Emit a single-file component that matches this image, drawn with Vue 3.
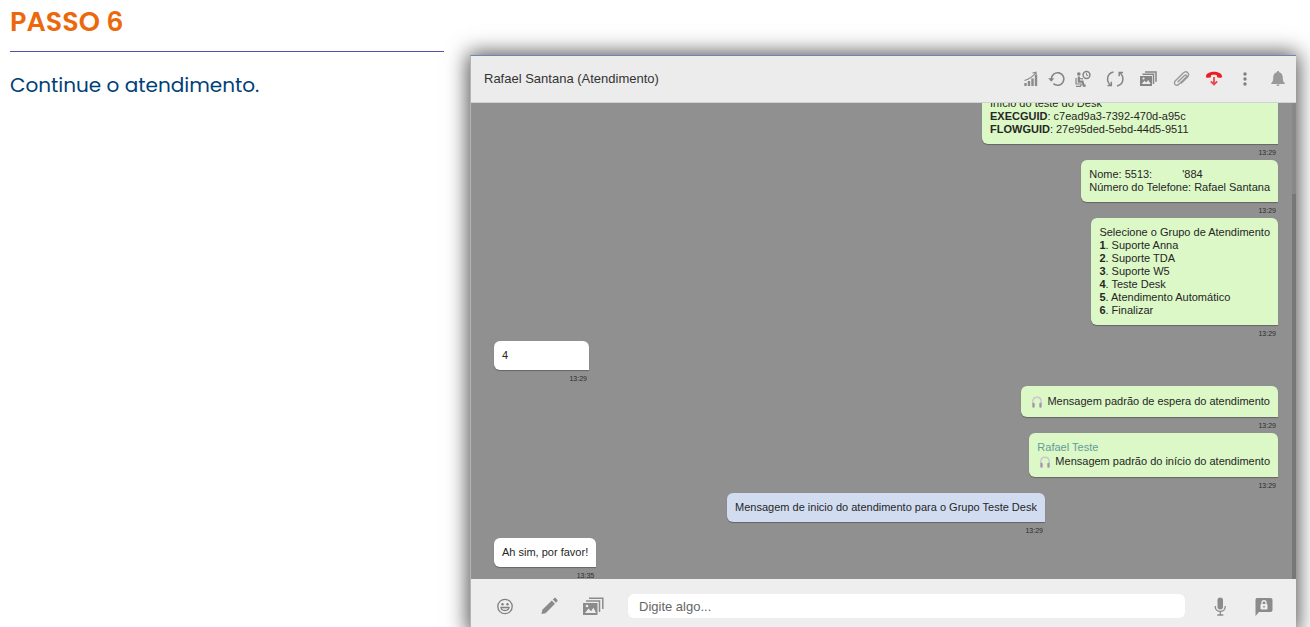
<script setup>
import { ref } from 'vue'

const draft = ref('')

const options = [
  'Suporte Anna',
  'Suporte TDA',
  'Suporte W5',
  'Teste Desk',
  'Atendimento Automático',
  'Finalizar',
]
</script>

<template>
  <main class="page">
    <section class="step">
      <h1>PASSO 6</h1>
      <p>Continue o atendimento.</p>
    </section>

    <section class="window">
      <header class="top">
        <h2>Rafael Santana (Atendimento)</h2>
        <div class="tools">
          <div class="tools-near">
            <button type="button" aria-label="Estatísticas">
              <svg viewBox="0 0 20 20" fill="none" stroke="#8b8b8b">
                <path d="M5.500 17v-3M9 17v-5M12.500 17V9.500M16 17V6" stroke-width="2.400" />
                <path d="M4.500 11.500Q11.500 9.500 15.500 4M12.500 4l3.500-.8.200 3.300" stroke-width="1.200" />
              </svg>
            </button>
            <button type="button" aria-label="Histórico">
              <svg viewBox="0 0 20 20" fill="none" stroke="#858585" stroke-width="1.600">
                <path d="M5.300 10a6.300 6.300 0 1 1 2.100 4.700" />
                <path d="M2.200 9.300l3.100 3.500 3-3.500z" fill="#858585" stroke="none" />
              </svg>
            </button>
            <button type="button" aria-label="Em espera">
              <svg viewBox="0 0 20 20" fill="none" stroke="#858585">
                <circle cx="6.800" cy="5" r="1.800" fill="#858585" stroke="none" />
                <path d="M6.800 7.500v5.200h3.700l1.200 4h2" stroke-width="2.200" />
                <path d="M7 9.500l4 .3M4 9v6h5v2M4 17.300h5" stroke-width="1.200" />
                <circle cx="14.500" cy="6" r="3.400" stroke-width="1.500" />
                <path d="M14.500 4.200V6.300h1.600" stroke-width="1" />
              </svg>
            </button>
          </div>
          <button type="button" aria-label="Atualizar">
            <svg viewBox="0 0 20 20" fill="none" stroke="#858585" stroke-width="1.500">
              <path d="M8.500 3C1.500 4.500.8 12.500 6 16.500M12 17c7-1.500 7.700-9.500 2.500-13.500" />
              <path d="M2.500 16.500h3.800v-3.800M18 3.500h-3.800v3.800" />
            </svg>
          </button>
          <button type="button" aria-label="Galeria">
            <svg viewBox="0 0 20 20" fill="none" stroke="#858585">
              <path d="M4.500 5.300h11v9.700M7 3h11v9.800" stroke-width="1.500" />
              <rect x="2" y="7" width="12" height="10" fill="#858585" stroke="none" />
              <path d="M3.700 15l2.700-3.300 1.800 1.800 2-2.500 2.400 4z" fill="#ececec" stroke="none" />
              <circle cx="5.500" cy="9.500" r="1.100" fill="#ececec" stroke="none" />
            </svg>
          </button>
          <button type="button" aria-label="Anexar">
            <svg viewBox="0 0 20 20" fill="none" stroke="#999" stroke-width="1.400" stroke-linecap="round">
              <path d="M7 12.800l6.500-6.200c1.500-1.400 3 .2 1.600 1.600l-7.200 7c-2.700 2.600-6.200-.8-3.500-3.500L12 4.300c3.600-3.400 7.800.4 4.300 4L10.500 14" />
            </svg>
          </button>
          <button type="button" aria-label="Encerrar atendimento">
            <svg viewBox="0 0 20 20">
              <path d="M2 7.500C2.300 1.300 17.700 1.300 18 7.500c0 1.200-.7 1.500-1.800 1.300l-2.400-.4c-1-.2-.8-1.300-.9-2.200-1.500-.6-4.300-.6-5.800 0-.1.900.1 2-.9 2.200l-2.400.4C2.700 9 2 8.700 2 7.500z" fill="#ee1c25" />
              <path d="M10 8v7.500M6.800 12.300l3.200 3.200 3.200-3.200" fill="none" stroke="#ea4850" stroke-width="1.800" />
            </svg>
          </button>
          <button type="button" class="slim" aria-label="Mais opções">
            <svg viewBox="0 0 18 20" fill="#808080">
              <circle cx="8" cy="5" r="1.700" /><circle cx="8" cy="10" r="1.700" /><circle cx="8" cy="15" r="1.700" />
            </svg>
          </button>
          <button type="button" aria-label="Notificações">
            <svg viewBox="0 0 20 20" fill="#999">
              <path d="M10 2c-.8 0-1.200.6-1.200 1.300C6 4 5.200 6.500 5.200 9c0 3-.7 4-2 5.200v.8h13.600v-.8C15.500 13 14.800 12 14.800 9c0-2.500-.8-5-3.600-5.700C11.200 2.600 10.800 2 10 2zM8.500 15.500h3c0 2-3 2-3 0z" />
            </svg>
          </button>
        </div>
      </header>

      <div class="chat">
        <div class="messages">
          <article class="message out">
            <div class="bubble long">
              <div>Início do teste do Desk</div>
              <div><b>EXECGUID</b>: c7ead9a3-7392-470d-a95c</div>
              <div><b>FLOWGUID</b>: 27e95ded-5ebd-44d5-9511</div>
            </div>
            <time>13:29</time>
          </article>
          <article class="message out">
            <div class="bubble">
              <div>Nome: 5513:<span class="blank"></span>'884</div>
              <div>Número do Telefone: Rafael Santana</div>
            </div>
            <time>13:29</time>
          </article>
          <article class="message out">
            <div class="bubble">
              <div>Selecione o Grupo de Atendimento</div>
              <div v-for="(option, i) in options" :key="option"><b>{{ i + 1 }}</b>. {{ option }}</div>
            </div>
            <time>13:29</time>
          </article>
          <article class="message in">
            <div class="bubble short">4</div>
            <time>13:29</time>
          </article>
          <article class="message out">
            <div class="bubble">
              <div class="queue">
                <svg class="phones" viewBox="0 0 12 12" fill="none">
                  <path d="M1.800 8V5.500c0-5.700 8.400-5.700 8.400 0V8" stroke="#cbc6d0" stroke-width="1.400" />
                  <path d="M2.500 8v2.500M9.500 8v2.500" stroke="#a792b2" stroke-width="2.400" stroke-linecap="round" />
                </svg>
                Mensagem padrão de espera do atendimento
              </div>
            </div>
            <time>13:29</time>
          </article>
          <article class="message out">
            <div class="bubble">
              <div class="agent">Rafael Teste</div>
              <div class="queue">
                <svg class="phones" viewBox="0 0 12 12" fill="none">
                  <path d="M1.800 8V5.500c0-5.700 8.400-5.700 8.400 0V8" stroke="#cbc6d0" stroke-width="1.400" />
                  <path d="M2.500 8v2.500M9.500 8v2.500" stroke="#a792b2" stroke-width="2.400" stroke-linecap="round" />
                </svg>
                Mensagem padrão do início do atendimento
              </div>
            </div>
            <time>13:29</time>
          </article>
          <article class="message note">
            <div class="bubble">Mensagem de inicio do atendimento para o Grupo Teste Desk</div>
            <time>13:29</time>
          </article>
          <article class="message in">
            <div class="bubble">Ah sim, por favor!</div>
            <time>13:35</time>
          </article>
        </div>
        <div class="rail"><div class="thumb"></div></div>
      </div>

      <form class="composer" @submit.prevent>
        <div class="actions">
          <button type="button" aria-label="Emojis">
            <svg viewBox="0 0 24 24" fill="none" stroke="#808080" stroke-width="1.300">
              <circle cx="12" cy="12.500" r="7.200" />
              <path d="M8 13.500h8c-.5 4-7.500 4-8 0z" />
              <circle cx="9.500" cy="10.300" r="1.200" fill="#808080" stroke="none" />
              <circle cx="14.500" cy="10.300" r="1.200" fill="#808080" stroke="none" />
            </svg>
          </button>
          <button type="button" aria-label="Editar">
            <svg viewBox="0 0 24 24" fill="#8b8b8b">
              <path d="M4.500 20l.8-4.200L14.800 6.500 18 9.700 8.600 19.200zM15.800 5.500l1.300-1.200c.6-.6 1.200-.6 1.800 0L20.200 5.700c.6.6.6 1.200 0 1.800L19 8.700z" />
            </svg>
          </button>
          <button type="button" aria-label="Imagens">
            <svg viewBox="0 0 24 24" fill="none" stroke="#8b8b8b">
              <path d="M5 7h13.500v11M8 4.300h13.800V15" stroke-width="1.500" />
              <rect x="2" y="9" width="14.500" height="12" fill="#8b8b8b" stroke="none" />
              <path d="M4 19l3.500-4.500 2.500 2.700 2.500-3.500L15 19z" fill="#eee" stroke="none" />
              <circle cx="6" cy="12" r="1.300" fill="#eee" stroke="none" />
            </svg>
          </button>
        </div>
        <input v-model="draft" type="text" aria-label="Mensagem" placeholder="Digite algo..." />
        <div class="actions">
          <button type="button" aria-label="Gravar áudio">
            <svg viewBox="0 0 24 24" fill="none" stroke="#8b8b8b" stroke-width="1.300">
              <rect x="9.500" y="3.500" width="5.500" height="12" rx="2.700" fill="#8b8b8b" stroke="none" />
              <path d="M7.300 12v1c0 5.800 9.900 5.800 9.900 0v-1M12.300 17.500v3.500M9.300 21h6" />
            </svg>
          </button>
          <button type="button" aria-label="Mensagem privada">
            <svg viewBox="0 0 24 24">
              <path d="M5 4h13.500c1.300 0 2 .7 2 2v10c0 1.300-.7 2-2 2H7l-3.500 4V6c0-1.300.5-2 1.500-2z" fill="#8b8b8b" />
              <rect x="8.500" y="10" width="7" height="5.500" rx="1" fill="#eee" />
              <path d="M10 10V8.700c0-2.600 4-2.600 4 0V10" fill="none" stroke="#eee" stroke-width="1.300" />
              <circle cx="12" cy="12.700" r=".9" fill="#8b8b8b" />
            </svg>
          </button>
        </div>
      </form>
    </section>
  </main>
</template>

<style>
body {
  margin: 0;
  background: #fff;
}
</style>

<style scoped>
.page {
  box-sizing: border-box;
  display: grid;
  grid-template-columns: 434fr 826fr;
  column-gap: 26px;
  height: 100vh;
  padding: 0 14px 0 10px;
  overflow: hidden;
  font-family: "Liberation Sans", Arial, sans-serif;
}

.step {
  font-family: Poppins, Inter, sans-serif;
}

.step h1 {
  margin: 0;
  padding: 4px 0 12px;
  border-bottom: 1px solid #5550ae;
  color: #eb690b;
  font-size: 27px;
  line-height: 35px;
  font-weight: 600;
}

.step p {
  margin: 17px 0 0;
  color: #004077;
  font-size: 20px;
  line-height: 32px;
}

.window {
  box-sizing: border-box;
  display: flex;
  flex-direction: column;
  height: calc(100vh - 49px);
  margin-top: 55px;
  border-top: 1px solid #6f86b5;
  border-left: 1px solid #b5b5b5;
  background: #ececec;
  box-shadow: 0 0 20px 2px rgba(0, 0, 0, 0.7);
}

button {
  width: 20px;
  padding: 0;
  border: 0;
  background: none;
  cursor: pointer;
}

button svg {
  display: block;
  width: 100%;
}

.top {
  box-sizing: border-box;
  display: flex;
  flex: 0 0 47px;
  align-items: center;
  justify-content: space-between;
  padding: 0 8px 0 13px;
  border-bottom: 1px solid #d2d2d2;
}

.top h2 {
  margin: 0;
  color: #333;
  font-size: 13px;
  line-height: 20px;
  font-weight: 400;
}

.tools {
  display: flex;
  align-items: center;
  gap: 13px;
}

.tools-near {
  display: flex;
  gap: 6px;
}

.tools .slim {
  width: 18px;
}

.chat {
  display: flex;
  flex: 1;
  min-height: 0;
  background: #909090;
}

.messages {
  display: flex;
  flex: 1;
  flex-direction: column;
  justify-content: flex-end;
  padding: 0 14px 0 23px;
  overflow: hidden;
}

.message {
  display: flex;
  flex: none;
  flex-direction: column;
  align-self: flex-start;
  color: #262626;
  font-size: 11px;
  line-height: 13px;
}

.message.out {
  align-self: flex-end;
}

.message.note {
  align-self: center;
}

.message:last-child {
  margin-bottom: -4px;
}

.bubble {
  box-sizing: border-box;
  padding: 8px;
  border-radius: 6px 6px 0 6px;
  background: #fff;
  box-shadow: 0 1px 1px rgba(0, 0, 0, 0.3);
  white-space: nowrap;
}

.out .bubble {
  background: #dcf8c6;
}

.note .bubble {
  background: #d1dcf0;
}

.long {
  min-width: 296px;
}

.short {
  min-width: 95px;
}

.blank {
  display: inline-block;
  width: 30px;
}

.agent {
  color: #5f9c9c;
}

.queue {
  display: flex;
  align-items: center;
  gap: 4px;
  padding-left: 2px;
  line-height: 15px;
}

.phones {
  width: 12px;
  height: 12px;
}

time {
  height: 16px;
  padding-right: 2px;
  color: #2c2c2c;
  font-size: 7px;
  line-height: 17px;
  text-align: right;
}

.rail {
  width: 4px;
  background: #888;
}

.thumb {
  height: 81%;
  margin-top: 91px;
  background: #777;
}

.composer {
  box-sizing: border-box;
  display: flex;
  flex: 0 0 54px;
  align-items: center;
  gap: 23px;
  padding: 0 20px 0 22px;
  background: #eee;
}

.actions {
  display: flex;
  gap: 20px;
}

.actions button {
  width: 24px;
}

.composer input {
  box-sizing: border-box;
  flex: 1;
  min-width: 0;
  height: 24px;
  padding: 0 11px;
  border: 0;
  border-radius: 6px;
  outline: 0;
  background: #fff;
  color: #444;
  font-family: inherit;
  font-size: 13px;
}

.composer input::placeholder {
  color: #666;
  opacity: 1;
}
</style>
